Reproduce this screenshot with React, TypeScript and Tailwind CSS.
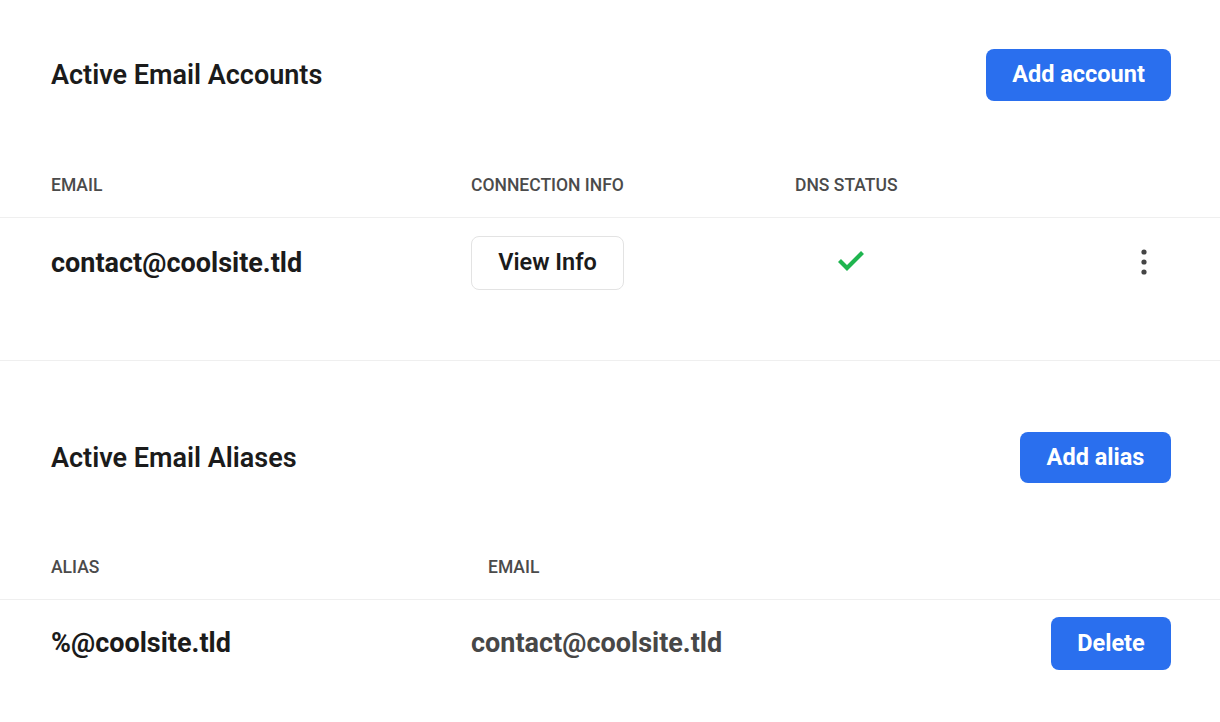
import React from "react";

function Check() {
  return (
    <svg width="28" height="22" viewBox="0 0 28 22" className="block">
      <path d="M2.5 10.5 L10 18 L25.5 2.5" fill="none" stroke="#1fb54f" strokeWidth="4.2" strokeLinecap="butt" strokeLinejoin="miter" />
    </svg>
  );
}

function Kebab() {
  return (
    <svg width="24" height="30" viewBox="0 0 24 30" className="block">
      <circle cx="12" cy="5" r="2.6" fill="#454545" />
      <circle cx="12" cy="15" r="2.6" fill="#454545" />
      <circle cx="12" cy="25" r="2.6" fill="#454545" />
    </svg>
  );
}

export default function App() {
  return (
    <div className="w-[1220px] min-h-[722px] bg-white text-[#1b1b1b]" style={{ fontFamily: "Roboto, 'Noto Sans', sans-serif" }}>
      {/* Section 1 */}
      <div className="pt-[49px] pl-[51px] pr-[49px] flex items-center justify-between">
        <h2 className="text-[27px] leading-[32px] font-semibold">Active Email Accounts</h2>
        <button className="w-[185px] h-[52px] rounded-[8px] bg-[#2a6fee] text-white text-[23.5px] font-bold">Add account</button>
      </div>
      <div className="mt-[72px] pb-[20px] border-b border-[#efefef] pl-[51px] pr-[49px] grid grid-cols-[420px_324px_1fr] text-[17.5px] leading-[24px] font-medium text-[#4b4b4b] uppercase">
        <div>Email</div>
        <div>Connection Info</div>
        <div>DNS Status</div>
      </div>
      <div className="pt-[18px] pb-[70px] border-b border-[#efefef] pl-[51px] pr-[49px] grid grid-cols-[420px_324px_1fr_auto] items-center">
        <div className="text-[27px] font-bold">contact@coolsite.tld</div>
        <div>
          <button className="w-[153px] h-[54px] rounded-[8px] border border-[#e3e3e3] bg-white text-[23.5px] font-semibold text-[#1b1b1b]">View Info</button>
        </div>
        <div className="pl-[42px] -mt-[4px]">
          <Check />
        </div>
        <div className="pr-[15px] -mt-[2px]">
          <Kebab />
        </div>
      </div>

      {/* Section 2 */}
      <div className="mt-[71px] pl-[51px] pr-[49px] flex items-center justify-between">
        <h2 className="text-[27px] leading-[32px] font-semibold">Active Email Aliases</h2>
        <button className="w-[151px] h-[51px] rounded-[8px] bg-[#2a6fee] text-white text-[23.5px] font-bold">Add alias</button>
      </div>
      <div className="mt-[72px] pb-[20px] border-b border-[#efefef] pl-[51px] pr-[49px] grid grid-cols-[437px_1fr] text-[17.5px] leading-[24px] font-medium text-[#4b4b4b] uppercase">
        <div>Alias</div>
        <div>Email</div>
      </div>
      <div className="pt-[17px] pl-[51px] pr-[49px] grid grid-cols-[420px_1fr_auto] items-center">
        <div className="text-[27px] font-bold">%@coolsite.tld</div>
        <div className="text-[27px] font-bold text-[#474747]">contact@coolsite.tld</div>
        <button className="w-[120px] h-[53px] rounded-[8px] bg-[#2a6fee] text-white text-[23.5px] font-bold">Delete</button>
      </div>
    </div>
  );
}
